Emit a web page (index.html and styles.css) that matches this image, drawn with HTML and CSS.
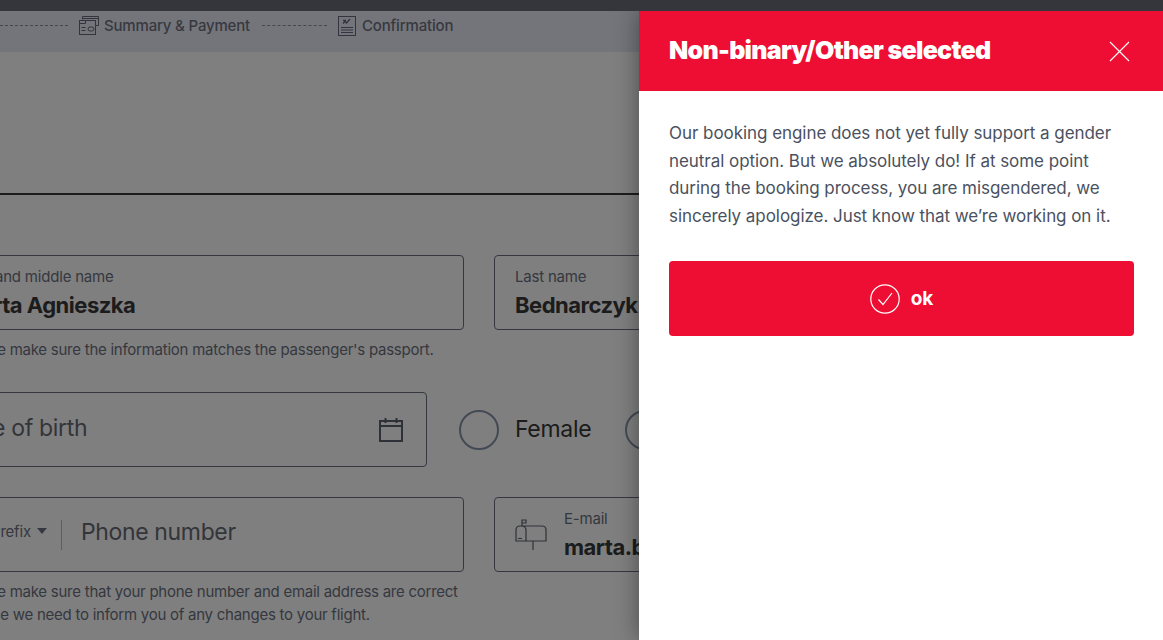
FILE: index.html
```html
<!DOCTYPE html>
<html lang="en">
<head>
<meta charset="utf-8">
<title>Passenger details</title>
<link rel="stylesheet" href="styles.css">
</head>
<body>
<div class="topstrip"></div>
<div class="stage">
  <header class="steps">
    <span class="dash dash-a"></span>
    <svg class="step-icon icon-summary" width="20" height="19" viewBox="0 0 20 19" fill="none" stroke="#646a7a" stroke-width="1"><path d="M3.500 3.500V0.500h16v9h-3M3.500 2.500h16"/><rect x="0.500" y="4.500" width="16" height="14"/><path d="M0.500 7.500h6v-3M2.500 11.500h4M2.500 14.500h4"/><rect x="9" y="11" width="6" height="4" rx="2"/></svg>
    <span class="step-label">Summary &amp; Payment</span>
    <span class="dash dash-b"></span>
    <svg class="step-icon icon-confirm" width="18" height="20" viewBox="0 0 18 20" fill="none" stroke="#646a7a" stroke-width="1"><rect x="0.500" y="0.500" width="17" height="19"/><path d="M3 11.500h12M3 14h12M3 16.500h12"/><path d="M5 7.500l2-2 1.500 1.500L12 3M5 4.500h3" stroke-width="1.300"/></svg>
    <span class="step-label">Confirmation</span>
  </header>
  <main class="page">
    <div class="rule"></div>
    <div class="row row-names">
      <div class="field">
        <span class="label">First and middle name</span>
        <span class="value">Marta Agnieszka</span>
      </div>
      <div class="field field-last">
        <span class="label">Last name</span>
        <span class="value">Bednarczyk</span>
      </div>
    </div>
    <p class="hint hint-one">Please make sure the information matches the passenger's passport.</p>
    <div class="row row-birth">
      <div class="field field-date">
        <span class="placeholder">Date of birth</span>
        <svg class="calendar" width="26" height="26" viewBox="0 0 26 26" fill="none" stroke="#5c6270" stroke-width="2"><rect x="2" y="4" width="22" height="20"/><path d="M2 9h22M7.500 1v5M18.500 1v5"/></svg>
      </div>
      <label class="radio"><span class="dot"></span><span class="radio-text">Female</span></label>
      <label class="radio"><span class="dot"></span><span class="radio-text">Male</span></label>
    </div>
    <div class="row row-contact">
      <div class="field field-phone">
        <span class="prefix">Prefix</span>
        <span class="caret"></span>
        <span class="divider"></span>
        <span class="placeholder placeholder-phone">Phone number</span>
      </div>
      <div class="field field-email">
        <svg class="mailbox" width="32" height="34" viewBox="0 0 32 34" fill="none" stroke="#5c6270" stroke-width="1.200"><path d="M7 8V2h4v3H7M1 23V12q0-4 4-4h22q4 0 4 4v11zM6 8q5 0 5 4v11M3 20.500h4M18 23v9"/></svg>
        <div class="email-text">
          <span class="label">E-mail</span>
          <span class="value">marta.bednarczyk@example.com</span>
        </div>
      </div>
    </div>
    <p class="hint hint-two">Please make sure that your phone number and email address are correct<br>in case we need to inform you of any changes to your flight.</p>
  </main>
  <div class="overlay"></div>
  <aside class="drawer">
    <div class="drawer-head">
      <h2>Non-binary/Other selected</h2>
      <svg width="21" height="21" viewBox="0 0 21 21" fill="none" stroke="#fff" stroke-width="1.100"><path d="M1 1l19 19M20 1L1 20"/></svg>
    </div>
    <div class="drawer-body">
      <p>Our booking engine does not yet fully support a gender neutral option. But we absolutely do! If at some point during the booking process, you are misgendered, we sincerely apologize. Just know that we’re working on it.</p>
      <button class="ok" type="button">
        <svg width="30" height="30" viewBox="0 0 30 30" fill="none" stroke="#fff" stroke-width="1.200"><circle cx="15" cy="15" r="14.200"/><path d="M8.500 15.500l4.500 5 9-11.500"/></svg>
        <span>ok</span>
      </button>
    </div>
  </aside>
</div>
</body>
</html>
```
FILE: styles.css
```css
* { box-sizing: border-box; }
html, body { margin: 0; height: 100%; }
body {
  width: 1163px;
  height: 640px;
  overflow: hidden;
  background: #fff;
  font-family: "Inter", "Liberation Sans", sans-serif;
  display: flex;
  flex-direction: column;
}
.topstrip { height: 11px; flex: none; background: #35363b; }
.stage { position: relative; flex: 1; overflow: hidden; background: #fff; }
.steps {
  height: 41px;
  background: #e8ebf6;
  display: flex;
  align-items: center;
  padding-bottom: 12px;
  color: #6e7280;
  font-size: 15px;
  font-weight: 500;
  letter-spacing: -0.18px;
}
.dash { display: block; border-top: 1px dashed #8a8e9a; }
.dash-a { width: 68px; margin-right: 11px; }
.dash-b { width: 65px; margin-left: 12px; margin-right: 11px; }
.step-icon { flex: none; }
.icon-summary { margin-right: 5px; }
.icon-confirm { margin-right: 6px; }
.step-label { white-space: nowrap; }
.page { margin-left: -60px; width: 1300px; }
.rule { height: 2px; background: #3a3a3a; margin: 141px 0 0; }
.row { display: flex; align-items: stretch; }
.row-names { margin-top: 60px; gap: 30px; }
.field {
  height: 75px;
  width: 524px;
  border: 1px solid #6b7180;
  border-radius: 4px;
  flex: none;
  background: #fff;
}
.row-names .field { padding: 12px 20px; display: flex; flex-direction: column; gap: 7px; }
.label { font-size: 15px; line-height: 17px; color: #6b7180; letter-spacing: -0.2px; white-space: nowrap; }
.value { font-size: 22px; line-height: 26px; font-weight: 700; color: #383838; letter-spacing: -0.5px; white-space: nowrap; }
.hint { margin: 0; font-size: 15px; color: #6b7180; letter-spacing: -0.25px; padding-left: 20px; white-space: nowrap; }
.hint-one { line-height: 20px; margin-top: 10px; }
.row-birth { margin-top: 32px; align-items: center; }
.field-date {
  width: 487px;
  display: flex;
  align-items: center;
  justify-content: space-between;
  padding: 0 22px 4px 15px;
}
.placeholder { font-size: 23px; color: #666a75; letter-spacing: -0.3px; white-space: nowrap; }
.calendar { margin-top: 4px; flex: none; }
.radio { display: flex; align-items: center; gap: 16px; margin-left: 32px; }
.radio + .radio { margin-left: 34px; }
.dot { width: 40px; height: 40px; border: 2px solid #8894a6; border-radius: 50%; background: #fff; display: block; }
.radio-text { font-size: 23px; color: #383838; letter-spacing: -0.3px; margin-bottom: 2px; }
.row-contact { margin-top: 30px; gap: 30px; }
.field-phone { display: flex; align-items: center; padding-left: 50px; }
.prefix { font-size: 15px; color: #6b7180; letter-spacing: -0.2px; margin-bottom: 7px; }
.caret { width: 0; height: 0; border: 5px solid transparent; border-top: 6px solid #6b7180; border-bottom: 0; margin: 0 0 7px 6px; }
.divider { width: 1px; height: 30px; background: #b8bcc6; margin: 0 19px 0 14px; }
.placeholder-phone { margin-bottom: 5px; letter-spacing: -0.35px; }
.field-email { display: flex; align-items: center; padding-left: 20px; gap: 17px; }
.mailbox { flex: none; margin-top: 1px; }
.email-text { display: flex; flex-direction: column; gap: 7px; }
.hint-two { line-height: 23px; margin-top: 8px; }
.overlay { position: absolute; inset: 0; background: rgba(0, 0, 0, 0.5); }
.drawer {
  position: absolute;
  top: 0;
  right: 0;
  bottom: 0;
  width: 524px;
  background: #fff;
  box-shadow: 0 0 22px rgba(0, 0, 0, 0.4);
}
.drawer-head {
  height: 80px;
  background: #ee0d33;
  color: #fff;
  display: flex;
  align-items: center;
  justify-content: space-between;
  padding: 0 33px 0 30px;
}
.drawer-head h2 { margin: 0 0 2px; font-size: 25px; font-weight: 900; letter-spacing: -0.7px; }
.drawer-body { padding: 29px 45px 0 30px; }
.drawer-body p { margin: 0; font-size: 17px; line-height: 27.600px; color: #4a5160; letter-spacing: -0.05px; }
.ok {
  width: 465px;
  height: 75px;
  margin-top: 31px;
  border: 0;
  border-radius: 4px;
  background: #ee0d33;
  color: #fff;
  display: flex;
  align-items: center;
  justify-content: center;
  gap: 11px;
  font: 700 19px "Inter", "Liberation Sans", sans-serif;
}
```
